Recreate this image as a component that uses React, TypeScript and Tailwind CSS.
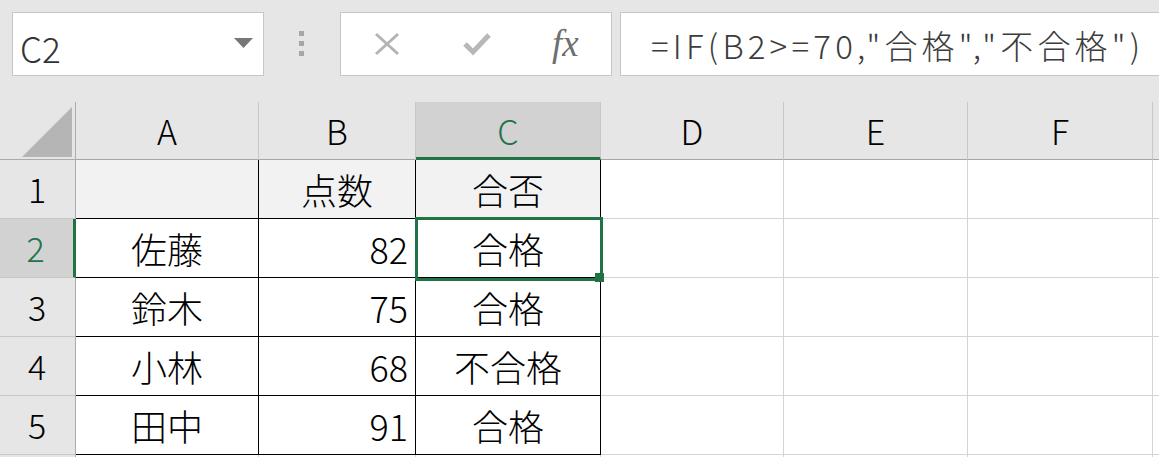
import React from "react";

const FONT = { fontFamily: '"Noto Sans CJK JP", "Noto Sans", sans-serif' };

interface Col {
  key: string;
  w: string;
  inTable: boolean;
}

const cols: Col[] = [
  { key: "A", w: "w-[183px]", inTable: true },
  { key: "B", w: "w-[157px]", inTable: true },
  { key: "C", w: "w-[185px]", inTable: true },
  { key: "D", w: "w-[183px]", inTable: false },
  { key: "E", w: "w-[184px]", inTable: false },
  { key: "F", w: "w-[185px]", inTable: false },
  { key: "", w: "w-[185px]", inTable: false }, // next column, cut off at the edge
];

// cell values: [A, B, C]
const rows: { n: number; a: string; b: string; c: string; head?: boolean }[] = [
  { n: 1, a: "", b: "点数", c: "合否", head: true },
  { n: 2, a: "佐藤", b: "82", c: "合格" },
  { n: 3, a: "鈴木", b: "75", c: "合格" },
  { n: 4, a: "小林", b: "68", c: "不合格" },
  { n: 5, a: "田中", b: "91", c: "合格" },
  { n: 6, a: "", b: "", c: "" },
];

function FormulaBar() {
  return (
    <div className="flex h-[102px] items-start pt-3 pl-3">
      {/* Name box */}
      <div className="flex h-16 w-[252px] items-center border border-[#c6c6c6] bg-white pl-[7px] pr-[10px]">
        <span className="pt-[6px] text-[35px] font-light leading-none text-[#333333]">C2</span>
        <svg className="ml-auto mb-[2px]" width="19" height="10" viewBox="0 0 19 10">
          <polygon points="0,0 19,0 9.5,10" fill="#777777" />
        </svg>
      </div>

      {/* Grip dots */}
      <div className="ml-[35px] mt-[19px] flex w-[5px] flex-col gap-[5px]">
        <span className="h-[5px] w-[5px] bg-[#a6a6a6]" />
        <span className="h-[5px] w-[5px] bg-[#a6a6a6]" />
        <span className="h-[5px] w-[5px] bg-[#a6a6a6]" />
      </div>

      {/* Cancel / enter / fx */}
      <div className="ml-[36px] flex h-16 w-[272px] items-center border border-[#c6c6c6] bg-white">
        <svg className="ml-[33px]" width="26" height="24" viewBox="0 0 26 24">
          <path d="M2 2 L24 22 M24 2 L2 22" stroke="#b4b4b4" strokeWidth="3" fill="none" />
        </svg>
        <svg className="ml-[62px]" width="30" height="24" viewBox="0 0 30 24">
          <path d="M3 12 L11 20 L27 3" stroke="#b8b8b8" strokeWidth="5" fill="none" />
        </svg>
        <span
          className="ml-[60px] pb-[2px] text-[37px] italic leading-none text-[#6e6e6e]"
          style={{ fontFamily: '"Liberation Serif", "DejaVu Serif", serif' }}
        >
          fx
        </span>
      </div>

      {/* Formula */}
      <div className="ml-2 -mr-4 flex h-16 flex-1 items-center border border-[#c6c6c6] bg-white pl-[30px]">
        <span className="whitespace-nowrap pt-[2px] text-[33px] font-light leading-none tracking-[4.2px] text-[#3c3c3c]">
          =IF(B2&gt;=70,"合格","不合格")
        </span>
      </div>
    </div>
  );
}

function ColumnHeaders() {
  return (
    <div className="flex h-[58px]">
      <div className="flex w-[76px] shrink-0 items-end justify-end border-r border-b border-[#ababab] bg-[#e6e6e6] pr-[3px] pb-[2px]">
        <svg width="50" height="50" viewBox="0 0 50 50">
          <polygon points="50,0 50,50 0,50" fill="#b5b5b5" />
        </svg>
      </div>
      {cols.map((c, i) =>
        c.key === "C" ? (
          <div
            key={i}
            className={`${c.w} flex shrink-0 items-center justify-center border-r border-r-[#c8c8c8] border-b-[3px] border-b-[#217346] bg-[#d2d2d2] pt-[3px] text-[34px] font-light leading-none text-[#217346]`}
          >
            {c.key}
          </div>
        ) : (
          <div
            key={i}
            className={`${c.w} flex shrink-0 items-center justify-center border-r border-r-[#c8c8c8] border-b border-b-[#a6a6a6] bg-[#e6e6e6] pt-[1px] text-[34px] font-light leading-none text-black`}
          >
            {c.key}
          </div>
        )
      )}
    </div>
  );
}

function DataRow({ row }: { row: (typeof rows)[number] }) {
  const selected = row.n === 2;
  const inTable = row.n <= 5;
  const tableBorder = inTable ? "border-black" : "border-[#d4d4d4]";
  const tableBg = row.head ? "bg-[#f2f2f2]" : "bg-white";
  return (
    <div className="flex h-[59px]">
      {selected ? (
        <div className="flex w-[76px] shrink-0 items-center justify-center border-r-[3px] border-b border-r-[#217346] border-b-[#c8c8c8] bg-[#d2d2d2] pr-[2px] text-[34px] font-light leading-none text-[#217346]">
          {row.n}
        </div>
      ) : (
        <div className="flex w-[76px] shrink-0 items-center justify-center border-r border-b border-r-[#ababab] border-b-[#c8c8c8] bg-[#e6e6e6] pr-[1px] text-[34px] font-light leading-none text-black">
          {inTable ? row.n : ""}
        </div>
      )}
      <div
        className={`w-[183px] flex shrink-0 items-center justify-center border-r border-b ${tableBorder} ${tableBg} text-[36px] font-light leading-none text-black`}
      >
        {row.a}
      </div>
      <div
        className={`w-[157px] flex shrink-0 items-center ${row.head ? "justify-center" : "justify-end pr-[7px]"} border-r border-b ${tableBorder} ${tableBg} text-[36px] font-light leading-none text-black`}
      >
        {row.b}
      </div>
      <div
        className={`w-[185px] flex shrink-0 items-center justify-center border-r border-b ${tableBorder} ${tableBg} text-[36px] font-light leading-none text-black`}
      >
        {row.c}
      </div>
      {cols
        .filter((c) => !c.inTable)
        .map((c, i) => (
          <div key={i} className={`${c.w} shrink-0 border-r border-b border-[#d4d4d4] bg-white`} />
        ))}
    </div>
  );
}

export default function App() {
  return (
    <div className="h-[457px] w-[1159px] overflow-hidden bg-[#e6e6e6]" style={FONT}>
      <FormulaBar />
      <div className="relative">
        <ColumnHeaders />
        {rows.map((r) => (
          <DataRow key={r.n} row={r} />
        ))}
        {/* Active cell C2 */}
        <div className="pointer-events-none absolute left-[415px] top-[115px] h-[64px] w-[188px] border-[3px] border-[#217346]" />
        <div className="pointer-events-none absolute left-[595px] top-[171px] h-[9px] w-[9px] bg-[#217346]" />
      </div>
    </div>
  );
}
